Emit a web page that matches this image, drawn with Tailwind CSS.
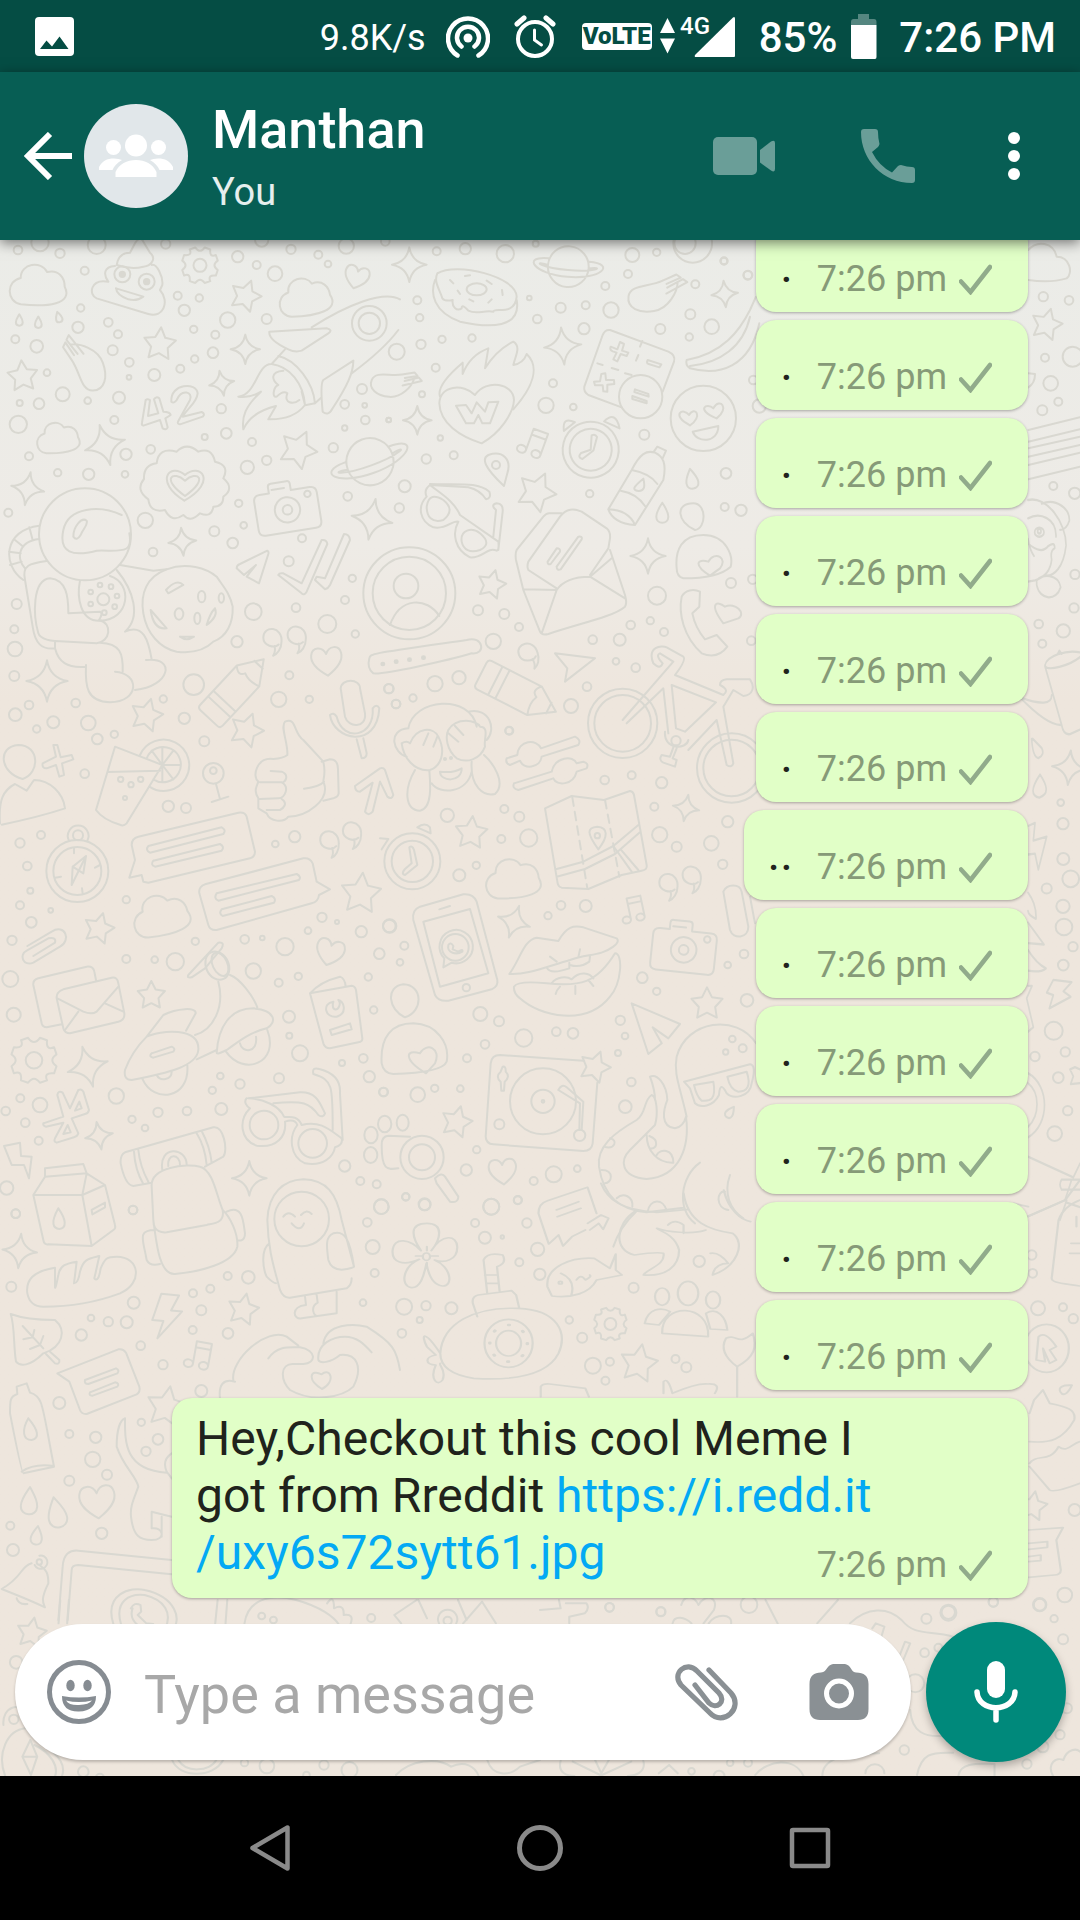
<!DOCTYPE html>
<html lang="en">
<head>
<meta charset="utf-8">
<meta name="viewport" content="width=device-width, initial-scale=1">
<title>Manthan</title>
<script src="https://cdn.jsdelivr.net/npm/@tailwindcss/browser@4"></script>
</head>
<body class="flex h-screen flex-col overflow-hidden bg-black font-['Roboto',sans-serif]">

<!-- System status bar -->
<div class="flex h-18 shrink-0 items-center bg-[#054d44] pr-6 pl-[35px] text-white">
  <svg class="h-[39px] w-[39px]" viewBox="0 0 39 39" role="img" aria-label="Picture saved"><rect width="39" height="39" rx="4" fill="#fff"/><path d="M5 32 11.500 23.500 17 29.500 24.500 19.500 33.500 32Z" fill="#054d44"/></svg>
  <span class="ml-auto pt-1 text-[36px] leading-[42px]">9.8K/s</span>
  <svg class="ml-5 h-11 w-11" viewBox="0 0 44 44" fill="none" stroke="#fff" stroke-width="4.500" stroke-linecap="round" role="img" aria-label="Hotspot"><circle cx="22" cy="24" r="4.500" fill="#fff" stroke="none"/><path d="M11.500 41.500A20 20 0 1 1 32.500 41.500M15.500 32.500A11 11 0 1 1 28.500 32.500"/></svg>
  <svg class="ml-6 h-11 w-[42px]" viewBox="0 0 42 44" fill="none" stroke="#fff" stroke-width="4" stroke-linecap="round" role="img" aria-label="Alarm"><circle cx="21" cy="25" r="17"/><path d="M3 10 10 4M39 10 32 4" stroke-width="5"/><path d="M20.500 16v10l7 5" stroke-width="3"/></svg>
  <span class="ml-[26px] flex h-[27px] w-[70px] items-center justify-center rounded-[4px] bg-white text-[24px] leading-none font-black text-[#054d44]">VoLTE</span>
  <svg class="ml-2 h-11 w-[75px] overflow-visible" viewBox="0 0 75 44" fill="#fff" role="img" aria-label="4G signal"><path d="M7.500 4 15 19H0ZM0 24.500H15L7.500 39.500Z"/><path d="M73 3.500Q75 2 75 5V42Q75 43 74 43H36Q34 43 35 41Z"/><text x="20" y="20" font-size="24" font-weight="500">4G</text></svg>
  <span class="ml-6 pt-1 text-[42px] leading-[50px] font-medium">85%</span>
  <svg class="ml-[14px] h-[45px] w-[26px]" viewBox="0 0 26 45" role="img" aria-label="Battery"><path d="M7 0H18V5H23Q25.500 5 25.500 8V11H0V8Q0 5 2.500 5H7Z" fill="#fff" opacity=".32"/><path d="M0 11H25.500V43Q25.500 45 24 45H2Q0 45 0 43Z" fill="#fff"/></svg>
  <span class="ml-[22px] pt-1 text-[42px] leading-[50px] font-medium">7:26 PM</span>
</div>

<!-- Conversation header -->
<header class="relative z-10 flex h-42 shrink-0 items-center bg-[#075e54] pr-3 pl-6 text-white shadow-[0_3px_12px_rgba(0,0,0,0.5)]">
  <button type="button" aria-label="Back" class="mr-3"><svg class="h-12 w-12" viewBox="0 0 48 48" fill="none" stroke="#fff" stroke-width="6"><path d="M26 2 4 24 26 46M4 24H48"/></svg></button>
  <svg class="mr-6 h-26 w-26 rounded-full bg-[#e1e7ea]" viewBox="0 0 104 104" fill="#fff" role="img" aria-label="Group"><circle cx="52" cy="41.500" r="11"/><circle cx="29.500" cy="43.500" r="7.500"/><circle cx="74.500" cy="43.500" r="7.500"/><path d="M31.500 73V68C35 60 43 56 52 56S69 60 72.500 68V73ZM15 66V63C18 57 23 54.500 30 54.500Q35 54.500 38 56C33 59 30 62 28.500 66ZM89 66V63C86 57 81 54.500 74 54.500Q69 54.500 66 56C71 59 74 62 75.500 66Z"/></svg>
  <div class="flex-1">
    <h1 class="text-[54px] leading-[72px] font-medium">Manthan</h1>
    <p class="text-[38px] leading-[52px] text-white/90">You</p>
  </div>
  <button type="button" aria-label="Video call" class="flex w-36 justify-center"><svg class="h-[38px] w-[62px]" viewBox="0 0 62 38" fill="#6a9e98"><rect width="44" height="38" rx="5"/><path d="M47 13 58 4.500Q62 2.500 62 6V32Q62 36 58 33.500L47 25.500Z"/></svg></button>
  <button type="button" aria-label="Call" class="flex w-36 justify-center"><svg class="h-[54px] w-[54px]" viewBox="0 0 54 54" fill="#6a9e98"><path d="M3 0H14Q17 0 17 3Q17 9 18.500 15Q18 17 17 18L11 23Q18 37 31 43.500L37 37Q38.500 36 40 36Q46 38 51 38Q54 38 54 41V51Q54 54 51 54C22 54 0 31 0 3Q0 0 3 0Z"/></svg></button>
  <button type="button" aria-label="More options" class="flex w-27 justify-center"><svg class="h-12 w-3" viewBox="0 0 12 48" fill="#fff"><circle cx="6" cy="6" r="6"/><circle cx="6" cy="24" r="6"/><circle cx="6" cy="42" r="6"/></svg></button>
</header>

<main class="relative flex min-h-0 flex-1 flex-col justify-end overflow-hidden bg-linear-to-b from-[#ebece8] via-[#eeebe6] via-20% to-[#eee6dd] to-30%">
  <!-- Doodle wallpaper -->
  <svg id="wallpaper" class="absolute inset-0 h-full w-full" viewBox="0 240 1080 1536" preserveAspectRatio="xMidYMin slice" fill="none" stroke="#d9d8d1" stroke-width="2" stroke-linecap="round" stroke-linejoin="round" aria-hidden="true">
    <defs>
      <path id="star" d="M0-10 3-4 9.500-3 5 2 6 8.500 0 5.500-6 8.500-5 2-9.500-3-3-4Z"/>
      <path id="spark" d="M0-10Q1.500-1.500 10 0Q1.500 1.500 0 10Q-1.500 1.500-10 0Q-1.500-1.500 0-10Z"/>
      <path id="heart" d="M0 9C-6 5-10 1-9-4S-2-9 0-4C2-9 8-9 9-4S6 5 0 9Z"/>
      <path id="cloud" d="M-6 6C-11 5-11-2-6-3C-6-8 1-9 3-5C7-6 9-3 9 0C12 6 3 7-6 6Z"/>
      <path id="drop" d="M0-10C3-5 6-1 6 4C6 8 3 10 0 10S-6 8-6 4C-6-1-3-5 0-10Z"/>
      <path id="gear" d="M-2.500-9.500Q0-6 2.500-9.500L5.500-8.500Q5-4 8.500-5.500L9.500-2.500Q6 0 9.500 2.500L8.500 5.500Q4 5 5.500 8.500L2.500 9.500Q0 6-2.500 9.500L-5.500 8.500Q-5 4-8.500 5.500L-9.500 2.500Q-6 0-9.500-2.500L-8.500-5.500Q-4-5-5.500-8.500ZM3.500 0A3.500 3.500 0 1 1-3.500 0A3.500 3.500 0 1 1 3.500 0"/>
      <path id="quote" d="M5 2C2 5-6 3-6-3C-6-12 8-11 7 0C7 5 4 9 1 10Q3 7 2 3"/>
      <path id="camera" d="M-8-5H-5V-7Q-5-8-4-8H1Q2-8 2-7V-5H8Q10-5 10-3V6Q10 8 8 8H-8Q-10 8-10 6V-3Q-10-5-8-5ZM4 1A4 4 0 1 1-4 1A4 4 0 1 1 4 1M1.500 1A1.500 1.500 0 1 1-1.500 1A1.500 1.500 0 1 1 1.500 1M8-3A1 1 0 1 1 6-3A1 1 0 1 1 8-3M-4-6H0"/>
      <path id="note" d="M-3 6V-9L7-9V6M-3-5H7M-3 6A3 2.500 0 1 1-9 6A3 2.500 0 1 1-3 6M7 6A3 2.500 0 1 1 1 6A3 2.500 0 1 1 7 6"/>
      <path id="bolt" d="M-3-10H5L2-3H7L-3 10L-1 2H-6Z"/>
      <path id="hand" d="M-8-4C-5-6 2-7 6-3S11 6 7 8S0 4-5 1M-8-4L-4-2L-10-5L-10-7L-2-3M-5 1L-10-2V-4L-5-1"/>
      <path id="planet" d="M6 0A6 6 0 1 1-6 0A6 6 0 1 1 6 0M-6-2C-14-2-10 3 0 3S14-2 6-2M-6 0C-11-1-8 1 0 1S11-1 6 0"/>
      <path id="clock" d="M10 0A10 10 0 1 1-10 0A10 10 0 1 1 10 0M7.500 0A7.500 7.500 0 1 1-7.500 0A7.500 7.500 0 1 1 7.500 0M-1-5Q0-6 1-5L1 0L-2 4Q-4 4-3 2L0 0ZM2-11Q5-16 8-10ZM-11-4Q-13-9-8-8Z"/>
      <path id="pencil" d="M-10-3V3Q-10 4-9 4H5L11 0L5-4H-9Q-10-4-10-3M-6-4V4M-4-4V4M5-4Q3-2 5-1Q4 1 5 4M9-1.500V1.500"/>
    </defs>
    <g id="stamps"></g>

    <g transform="translate(0 240) scale(.33333)" stroke-width="6">
      <path d="M350 75C355 45 375 38 390 38L405 10Q420-15 430 5L450 38C470 55 455 78 430 80C410 85 380 85 350 75M345 78C310 80 310 105 325 125C270 115 265 165 290 175L445 222C490 235 510 185 480 150L487 135C490 110 470 70 455 75M348 145L430 170Q410 185 385 178Q350 165 348 145"/>
      <circle cx="367" cy="103" r="24"/><circle cx="367" cy="103" r="8" fill="#d9d8d1"/><circle cx="440" cy="125" r="24"/><circle cx="440" cy="125" r="8" fill="#d9d8d1"/>
      <path d="M935 262C1040 195 1150 150 1200 178M1195 270Q1150 330 1055 400M808 275 980 265Q1000 270 985 280L905 332Q885 338 865 328Q805 300 808 275M855 328 815 372C770 370 770 465 715 470Q750 475 783 455C735 500 725 530 730 568C740 545 760 515 828 498L805 538Q880 540 915 495C910 430 870 380 815 372M835 348C890 360 940 430 945 490L915 496M945 490 965 472M1060 362 970 420Q960 430 968 515Q985 530 998 505C1040 440 1060 400 1060 362M850 392C810 395 815 420 835 435C820 440 815 475 830 470Q850 450 862 460C850 490 880 495 898 480M905 455 915 495"/>
      <circle cx="1108" cy="250" r="52"/><circle cx="1108" cy="250" r="32"/>
      <path d="M437 480Q442 475 450 480L444 528 475 520 462 478Q468 468 478 475L490 515Q510 515 512 525L496 535 503 562Q498 572 488 565L480 540 430 557Q424 555 426 548ZM514 485C510 430 590 425 593 460C590 490 565 500 548 530L605 516Q617 522 608 530L540 553Q530 552 535 543L570 480C580 455 545 445 530 480Q522 492 514 485"/>
      <path d="M530 635Q560 605 595 635Q635 620 645 665Q690 675 670 715Q705 745 670 770Q670 800 640 800Q635 835 600 820Q570 850 550 825Q515 850 495 810Q450 820 445 778Q405 750 432 717Q430 675 470 670Q475 620 530 635M553 782C460 725 510 665 555 705C600 665 655 725 553 782M555 768C480 715 520 690 555 722C590 690 630 715 555 768"/>
      <circle cx="255" cy="883" r="138"/><path d="M240 1022C230 1070 240 1145 300 1142C390 1140 400 1030 330 1008"/><circle cx="310" cy="1078" r="18"/>
      <path d="M118 857C10 870 5 975 70 1020M118 897C50 905 50 960 75 985M88 862 98 900M45 900 70 920M27 935 62 940M30 975 65 965M365 825C300 795 205 800 190 870C175 940 220 950 290 932C360 930 400 945 388 880M220 890C220 860 245 830 260 842C265 855 250 865 242 885Q230 905 220 890"/>
      <path d="M140 963C90 970 65 975 75 1020L98 1160C105 1210 125 1230 165 1225V1203M115 1180C100 1130 95 1020 150 1015C200 1020 205 1070 205 1120L300 1115Q310 1120 297 1140C340 1150 330 1205 290 1210L165 1203C120 1200 115 1180 115 1180M165 1225C175 1265 200 1285 258 1280M300 1208C360 1210 370 1240 368 1295M258 1275C255 1340 260 1385 330 1387C420 1385 420 1300 345 1295M405 1350C510 1340 530 1250 438 1260M350 990C400 1050 425 1130 375 1175C430 1150 445 1200 455 1258M360 975 460 992 500 988"/>
      <path d="M500 988C560 965 620 985 650 1010C670 1040 690 1060 698 1100C700 1150 680 1190 640 1205C610 1235 570 1240 530 1235C480 1225 440 1180 430 1120C420 1060 440 1010 500 988M498 1050Q530 1015 550 1035L505 1060ZM452 1110 500 1165Q460 1170 452 1110M645 1105Q655 1130 620 1155Q630 1120 645 1105M540 1190H582Q560 1205 540 1190"/>
      <ellipse cx="605" cy="1070" rx="11" ry="17"/><ellipse cx="537" cy="1122" rx="13" ry="17"/><ellipse cx="592" cy="1135" rx="9" ry="17"/><ellipse cx="664" cy="1074" rx="8" ry="14"/>
      <circle cx="272" cy="1056" r="7"/><circle cx="300" cy="1035" r="7"/><circle cx="333" cy="1040" r="7"/><circle cx="351" cy="1068" r="7"/><circle cx="344" cy="1100" r="7"/><circle cx="272" cy="1092" r="7"/><circle cx="313" cy="1118" r="7"/>
      <path d="M802 932Q807 935 805 942L777 1030 740 1010 768 975 732 1005 710 985Q710 975 720 972ZM835 1005 905 1060Q912 1068 920 1055L982 912Q980 898 965 900L905 1030 850 1000Q838 998 835 1005M945 1020 975 1048Q985 1045 990 1035L1050 900Q1048 882 1032 882L975 1015 950 1010Z"/>
      <path d="M1022 1345C1025 1315 1080 1315 1080 1345L1095 1420C1100 1465 1045 1465 1035 1430ZM990 1425C1000 1500 1130 1530 1138 1405Q1130 1390 1118 1405C1125 1490 1030 1510 1010 1430Q1000 1415 990 1425"/>
      <path d="M1108 1255C1110 1240 1120 1240 1400 1200 1450 1185 1460 1245 1415 1240 1350 1260 1150 1305 1120 1300Q1100 1285 1108 1255"/>
      <path d="M1148 1272h1M1188 1265h1M1228 1259h1M1270 1253h1" stroke-width="14"/>
      <circle cx="1228" cy="1060" r="138"/><circle cx="1228" cy="1060" r="110"/><circle cx="1218" cy="1038" r="37"/><path d="M1170 1155C1200 1070 1280 1070 1318 1128"/>
    </g>

    <g transform="translate(380 240) scale(.33333)" stroke-width="6">
      <path d="M172 100C230 65 410 110 410 170C405 230 340 200 340 215C310 210 290 225 265 212Q245 190 245 205C230 215 215 200 218 180Q195 185 187 175C180 150 160 125 172 100M165 120C150 160 160 215 240 245C330 265 425 265 410 180M255 108 270 106M210 120 220 130M233 152 240 162M320 122 335 132M366 150 368 165M335 178 325 188M268 178 280 184"/><ellipse cx="290" cy="148" rx="30" ry="18"/>
      <path d="M180 470C170 440 210 400 248 368V402Q270 345 325 325L315 385Q350 330 400 305C425 320 405 350 400 375Q430 370 440 342C480 380 460 440 400 508M285 465C250 430 180 435 178 490C180 550 240 590 305 610C360 580 400 520 402 480C400 430 320 415 285 465M228 497 258 550H282L295 525 307 550H330L355 485 325 487 315 515 290 487 275 520 258 495Z"/>
      <path d="M690 270 865 335Q888 345 882 365L848 455M725 502 625 465Q610 455 613 440L668 285Q675 268 690 270M787 303 780 320M775 345 768 362M652 370 668 375M695 384 715 390M735 400 755 405M692 320Q688 330 698 334L710 338 700 358 712 364 722 342 740 348 745 338 726 332 732 312 720 306 712 328ZM642 425 660 424 664 402 676 400 678 420 702 420 703 432 682 434 682 455 670 454 668 436 645 436ZM803 360Q798 370 806 372L838 382 844 373ZM765 448 805 462 806 470 763 456ZM757 468 800 483 800 490 757 477Z"/><circle cx="782" cy="470" r="65"/>
      <path d="M1128 170 1110 210C1080 270 1030 340 920 360Q915 375 930 385C1020 410 1110 380 1138 250M1110 230C1090 320 1020 370 930 378"/>
      <circle cx="970" cy="535" r="98"/><path d="M938 575 1015 558C1015 610 950 610 938 575M930 556C870 525 910 500 927 525C945 495 970 530 930 556M1010 535C945 510 980 485 1000 505C1020 470 1050 505 1010 535"/>
      <path d="M372 738C310 680 305 655 325 645C370 630 395 660 382 700Z"/><circle cx="348" cy="675" r="12"/>
      <path d="M685 808 755 690C780 640 800 630 825 638C850 650 860 670 850 720L765 855Q700 850 685 808M820 637 832 620 858 632 848 655M755 690Q810 700 832 732M722 752Q770 760 795 798M685 808Q745 810 765 855M790 716C760 740 755 750 775 753Q800 755 790 716"/>
      <path d="M150 735Q130 750 140 770C110 800 120 845 160 862C200 870 215 840 235 845C215 880 225 930 270 952C310 955 320 920 350 932Q358 930 355 905L240 825C220 780 180 760 150 735L265 742Q300 750 318 778Q335 775 328 755C290 725 240 735 150 732M340 890 348 810Q330 795 350 790Q370 790 368 815L355 930"/><path d="M140 800C145 765 165 765 190 780C215 800 215 820 190 840C155 850 140 830 140 800M245 905C240 870 275 860 300 880C330 905 320 920 300 930C270 940 250 930 245 905"/>
      <path d="M545 820H510Q500 818 490 830L410 930Q405 940 408 960L430 1050 480 1175Q485 1187 505 1182C600 1150 700 1130 735 1100Q742 1090 735 1065L690 930M530 1045 445 990Q440 980 445 965L540 830C560 805 580 805 605 815L680 865Q692 875 690 895L685 925 630 1005M430 1048 530 1050 485 1180M530 1050C550 1020 590 1010 630 1010L735 1075M630 1010 695 955M503 965 530 925Q542 925 540 935L512 972Q502 975 503 965M530 980 595 890Q608 888 605 898L542 988Q530 992 530 980" />
      <path d="M890 985C885 930 905 885 970 885C1040 885 1060 950 1052 980C1020 1010 950 1015 910 1015Q890 1010 890 985M990 1007C940 975 950 955 985 965C1005 930 1045 955 1020 985ZM940 790C980 790 980 865 945 870C890 845 885 790 940 790"/>
      <path d="M905 1070C915 1050 940 1045 960 1055L958 1100 937 1120C945 1160 960 1180 975 1198L1010 1185 1042 1220C1020 1250 990 1250 965 1240C910 1190 895 1120 905 1070M1030 1150C985 1090 1010 1080 1035 1100C1065 1085 1100 1120 1075 1135Z"/>
      <path d="M525 1240 645 1255 555 1325 562 1285Z"/>
      <circle cx="728" cy="1450" r="104"/><circle cx="728" cy="1450" r="85"/><circle cx="1055" cy="1584" r="104"/><circle cx="1055" cy="1584" r="85"/>
      <path d="M728 1440 880 1265 840 1240Q825 1245 848 1270Q840 1290 820 1270C800 1220 845 1215 860 1222L910 1250Q920 1260 885 1305L1030 1365Q1050 1350 1020 1335Q1020 1320 1040 1318H1110C1125 1340 1120 1365 1090 1368L1060 1350 1030 1400 1060 1570Q1055 1585 1040 1575L1010 1440 925 1530M740 1450 850 1345 865 1480M875 1335 1008 1387 915 1475 888 1465Z"/><circle cx="888" cy="1502" r="14"/><path d="M855 1475C850 1530 920 1530 925 1500M880 1522 870 1550 845 1545Q835 1560 850 1568L885 1580 890 1560 878 1555 890 1525"/>
    </g>

    <g transform="translate(0 720) scale(.33333)" stroke-width="6">
      <path d="M68 177C0 160-10 80 55 75C120 75 120 160 68 177M0 310C-5 240 10 210 45 192L80 212 102 180C150 180 190 220 195 265Q120 290 5 314"/>
      <path d="M160 75 168 110 128 130Q125 145 140 145L168 135 178 170 192 165 186 130 220 118 215 105 182 112 172 75Z"/>
      <path d="M345 80 487 135 380 310Q370 320 360 314Q310 300 288 270ZM322 156 480 152M420 105A77 77 0 1 1 448 200M440 115A53 53 0 1 1 460 178M487 135 487 82M487 135 455 92M487 135 520 92M487 135 540 135M487 135 520 178M487 135 487 185"/><circle cx="362" cy="178" r="8"/><circle cx="393" cy="194" r="8"/><circle cx="422" cy="178" r="8"/><circle cx="375" cy="234" r="6"/>
      <circle cx="640" cy="160" r="31"/><circle cx="640" cy="152" r="10"/><path d="M648 192 660 237M635 246 685 230"/>
      <path d="M862 105C865 70 840 20 855 5C890-10 880 40 910 60L970 125C980 170 965 180 972 190C990 240 920 290 865 290C850 310 810 305 800 280L775 265V235C760 210 770 200 775 185C755 170 770 110 820 117Q850 115 862 105M812 153 845 155C870 165 855 190 845 187H780M845 187C870 200 855 235 835 235L780 237M845 237C865 250 850 265 840 270L800 270M965 125 990 118Q1015 118 1014 150L1016 220Q1015 230 1000 235L970 242M972 185Q960 200 912 206"/>
      <path d="M1070 58 1085 115Q1100 115 1100 100L1090 55"/>
      <path d="M1065 198 1140 145Q1150 142 1155 150L1180 225Q1175 240 1162 230L1140 185 1118 275Q1105 290 1095 275L1118 188 1080 215Q1065 215 1065 198"/>
      <circle cx="232" cy="453" r="93"/><circle cx="232" cy="453" r="72"/><circle cx="234" cy="346" r="15"/><path d="M207 362A31 31 0 1 1 262 362M258 408 215 495 218 440ZM218 440 250 460 258 408M222 385V400M300 435 285 443M165 473 183 470M246 505 248 520"/>
      <path d="M395 375Q395 355 415 350L715 278Q735 275 740 290L765 395Q765 410 750 415L445 488 430 485 425 465 388 473 405 420ZM445 378 665 322Q680 330 670 342L450 398Q435 390 445 378M460 422 660 372Q675 380 665 392L465 440Q450 435 460 422"/>
      <path d="M598 520Q595 500 615 493L910 415Q930 412 938 430L950 485 990 508 957 525Q955 545 935 550L650 630Q630 632 625 615ZM650 520 890 462Q905 470 897 480L655 542Q640 535 650 520M665 568 815 528Q830 535 822 548L668 588Q655 580 665 568"/>
      <path d="M82 678 155 635C195 610 215 660 180 680L100 728C70 740 55 705 80 692L145 655Q170 650 165 668L100 708"/>
      <path d="M185 913 140 922Q128 922 125 910L100 795Q98 780 115 775L260 740Q280 738 283 755L288 780M190 808 335 773Q352 770 355 790L373 880Q375 900 355 905L210 940Q195 940 190 925L170 835Q168 815 190 808M172 835 250 875Q275 885 290 875L355 800M195 930 235 875M370 875 315 850"/>
      <path d="M565 765 655 668Q675 665 665 685L615 745 575 772Q560 775 565 765M375 1050C390 1010 410 980 440 950C480 930 600 920 595 990C590 1040 500 1060 395 1080Q370 1080 375 1050M440 950 490 885C530 865 590 860 587 880L558 932M585 945C640 930 675 860 655 785M690 765C720 775 760 830 772 862M650 998C655 920 690 865 760 865C830 870 830 910 800 925C740 940 710 970 680 990Q650 1005 650 998M590 1018 650 990M428 1078C460 1150 570 1140 562 1035M470 1065C480 1085 515 1080 515 1055M678 995C730 1070 840 1030 802 930M720 970C725 1000 775 1000 768 950M455 1000 515 980Q528 985 520 995L460 1013Q445 1010 455 1000"/><ellipse cx="652" cy="737" rx="34" ry="44" transform="rotate(-25 652 737)"/><ellipse cx="660" cy="733" rx="22" ry="37" transform="rotate(-25 660 733)"/>
      <path d="M930 820 1055 797Q1065 798 1068 810L1087 955Q1088 965 1075 967L990 985Q975 985 970 970ZM930 820Q960 785 1020 770 1035 775 1037 800M990 930 1050 910 1055 928 995 945ZM1015 840C1025 850 1015 872 1005 868Q995 865 1000 845C965 850 975 895 1010 890C1045 880 1030 840 1015 840"/>
      <path d="M130 1210 190 1190 172 1125Q175 1110 188 1118L210 1165 235 1110Q245 1105 250 1115L267 1170Q265 1180 255 1182L215 1195 235 1240Q232 1250 222 1252L170 1268Q160 1265 165 1255L190 1208 138 1220Q128 1218 130 1210M238 1145 245 1165 225 1172ZM203 1215 212 1237 190 1242Z"/>
      <circle cx="792" cy="1215" r="43"/><circle cx="938" cy="1270" r="43"/><path d="M740 1135C730 1145 740 1160 750 1165C715 1200 720 1260 770 1277C830 1285 860 1250 855 1205Q885 1195 892 1215C865 1250 870 1310 915 1330C970 1340 1000 1310 1005 1282Q1030 1275 1025 1255C990 1230 960 1200 905 1215C890 1180 860 1195 852 1190C840 1160 790 1135 745 1135L900 1117C950 1115 960 1150 975 1180Q970 1195 955 1185C930 1150 910 1140 820 1150M998 1230C998 1100 1000 1080 940 1062Q935 1040 958 1047C1010 1060 1022 1090 1020 1120L1028 1260"/>
      <path d="M12 1278 60 1268 63 1308 95 1310 87 1375 72 1335H35Z"/>
      <path d="M135 1370V1345L250 1332 260 1360ZM135 1370 100 1425 130 1560Q132 1575 145 1573L275 1578 340 1530Q348 1525 345 1515L315 1395 260 1360 247 1425 275 1578M100 1425H247L315 1395M275 1470 315 1448V1462L277 1483ZM175 1465C150 1510 160 1525 178 1527C200 1525 200 1500 175 1465"/>
      <path d="M362 1330Q360 1305 375 1297L640 1222C670 1215 685 1290 670 1310L615 1340M455 1388 400 1398Q375 1395 362 1330M402 1295Q405 1350 430 1392M415 1290Q420 1340 445 1385M590 1240Q615 1280 620 1335M605 1233Q630 1280 635 1328M487 1350C475 1275 560 1280 560 1335M505 1338C500 1300 540 1300 540 1335M455 1400C450 1340 560 1330 600 1340C640 1350 650 1430 668 1470C675 1510 640 1510 620 1515L500 1537C460 1540 460 1510 460 1500ZM460 1500C470 1580 480 1665 525 1662C600 1655 700 1630 712 1580C715 1540 690 1490 668 1470M465 1530C410 1530 430 1560 440 1620Q450 1640 480 1632M680 1475C730 1450 730 1510 735 1540 735 1570 710 1560 712 1560"/>
      <path d="M802 1500C805 1420 850 1380 910 1378C980 1380 1010 1420 1025 1500L1062 1640M802 1500C805 1600 825 1650 840 1710Q850 1735 870 1733L1040 1705Q1055 1695 1055 1675M1000 1540C975 1550 980 1580 985 1620C1000 1670 1065 1640 1062 1640C1050 1560 1035 1530 1000 1540M808 1570C780 1590 790 1650 800 1670Q820 1690 828 1690M915 1730 918 1755C870 1760 880 1800 905 1795L1010 1780V1715M950 1725 953 1748C930 1760 940 1790 955 1788M850 1490Q865 1470 885 1490M903 1485Q920 1465 935 1482M875 1510Q900 1540 912 1510"/><circle cx="905" cy="1497" r="82"/>
    </g>

    <g transform="translate(380 720) scale(.33333)" stroke-width="6">
      <path d="M85 25C100-65 270-80 290 20M85 25C20 30 40 100 80 110M265-25C330-40 350 30 320 60M65 70Q80 60 90 70C110 20 160 20 175 50C200 100 180 140 150 150C100 155 70 110 65 70M205 30C230-10 290 0 300 20C330 20 310 60 315 80C300 120 260 130 230 115C200 90 195 50 205 30M145 40 130 75M172 50 160 80M225 18 250 45M205 40 235 65M105 150C70 210 75 270 120 272C160 265 150 180 148 152M275 125C270 200 310 230 345 222C380 190 340 130 312 105M155 190C180 225 260 220 275 155M180 155Q220 160 245 145C245 190 180 185 180 155"/><circle cx="195" cy="117" r="3"/><circle cx="213" cy="114" r="3"/>
      <path d="M380 115 412 105C415 60 470 55 483 85L585 50Q605 60 595 75L485 110C480 145 430 150 420 122L390 135Q375 130 380 115M402 190 515 155C525 110 580 105 590 130L610 125Q628 130 620 145L590 155C580 195 530 200 520 175L415 210Q395 205 402 190"/>
      <path d="M577 232 622 505M675 240 718 470" stroke-dasharray="26 18"/><path d="M495 265 575 228 672 240 750 213Q760 215 762 225L800 435Q803 450 785 452L725 465 625 507 545 503Q535 500 533 490ZM527 448 610 425 700 378 775 315M530 470 615 447 705 402 778 338M700 378 755 455M722 388 775 450M655 388C620 340 620 322 652 320C685 322 685 350 655 388"/><circle cx="652" cy="347" r="8"/>
      <circle cx="97" cy="424" r="84"/><circle cx="97" cy="424" r="62"/><path d="M88 382Q97 375 102 390L112 435 75 465Q62 462 75 447L95 430ZM112 322Q135 305 150 322L152 340ZM0 355 25 357 5 388"/>
      <path d="M100 600Q95 570 120 560L250 523Q280 520 290 545L352 780Q355 800 335 808L205 842Q175 845 165 825ZM130 605 270 567 325 760 180 800ZM178 568 210 558M190 742 193 715A50 50 0 1 1 215 728Z"/><circle cx="226" cy="682" r="40"/><path d="M205 675Q212 665 220 678L218 688 235 695Q250 685 247 695C230 705 200 700 205 675"/><circle cx="259" cy="803" r="11"/>
      <path d="M388 762C420 720 430 660 470 653L535 663C560 620 580 615 610 622L710 655Q720 665 700 680C660 710 620 700 570 720C500 740 440 765 388 762M402 800C410 785 450 785 500 790C600 800 650 790 705 700C730 700 725 790 690 830C620 920 480 890 420 835Q400 820 402 800M500 742Q510 765 568 745V728M570 735Q600 745 628 725L630 710M515 790C530 770 560 768 575 778C600 750 630 760 640 775M510 710 530 725M600 688 595 712M540 800Q530 810 527 822M586 798V822M625 780 640 798"/>
      <path d="M1030 515C1040 490 1080 490 1085 515L1105 620C1105 655 1060 660 1050 630ZM1110 530 1125 610"/>
      <path d="M75 892C25 870 15 800 70 793C130 795 130 875 75 892M5 1030C0 950 35 910 100 910C170 912 210 970 200 1025C190 1050 120 1060 40 1062Q10 1060 5 1030M138 1060C70 1020 75 985 120 1000C140 965 185 985 165 1030Z"/>
      <path d="M755 850 900 912 865 955 818 922 845 970 805 1002Z"/>
      <path d="M610 1022 360 1005Q335 1005 332 1030L317 1250Q318 1272 340 1273L610 1293Q635 1293 638 1270L652 1088M368 1040Q378 1038 377 1055 392 1070 374 1085L372 1112H364L362 1085Q345 1070 362 1055ZM535 1110Q545 1090 560 1102L610 1145 605 1230M535 1110 600 1150 598 1230"/><circle cx="489" cy="1144" r="99"/><circle cx="489" cy="1144" r="35"/><circle cx="489" cy="1144" r="4"/><circle cx="358" cy="1213" r="15"/><circle cx="599" cy="1246" r="17"/>
      <path d="M920 1190C900 1100 880 1060 890 1010C920 900 1070 880 1128 970M912 1085 1110 1033Q1130 1035 1115 1090C1110 1130 1060 1140 1040 1120Q1020 1080 1017 1125C1000 1160 960 1165 945 1150L930 1105ZM942 1095 1000 1085C1010 1140 990 1145 965 1142Q950 1130 942 1095M1042 1070 1100 1055C1115 1100 1100 1115 1075 1115Q1050 1110 1042 1070"/>
      <path d="M810 1070C830 1060 860 1090 862 1140C850 1170 840 1220 885 1225Q910 1220 918 1190C930 1280 900 1370 800 1377C720 1370 720 1320 750 1290L825 1215C835 1180 830 1130 815 1125C790 1140 800 1180 770 1200C700 1240 650 1280 657 1340C670 1430 720 1470 800 1477L910 1463M810 1070Q825 1110 825 1140M800 1245C800 1290 830 1330 880 1328M830 1305C840 1285 880 1285 880 1328M808 1248C840 1260 830 1290 810 1285M690 1255C715 1260 705 1290 672 1280M665 1350C705 1350 695 1390 675 1390M710 1435C730 1415 760 1430 757 1460M803 1475C810 1435 850 1435 860 1472M960 1328C900 1370 890 1470 945 1510M1050 1365C1030 1420 1050 1470 1090 1495M1035 1415C1010 1410 1005 1465 1045 1470M768 1475Q720 1520 700 1580"/>
      <path d="M165 1375Q185 1355 195 1370L235 1430Q235 1450 210 1445L170 1390ZM90 1250 25 1247Q5 1248 5 1275C5 1350 20 1350 55 1345"/><circle cx="126" cy="1312" r="65"/><circle cx="126" cy="1312" r="39"/><ellipse cx="68" cy="1208" rx="18" ry="24"/><ellipse cx="14" cy="1212" rx="20" ry="25"/><ellipse cx="-27" cy="1245" rx="20" ry="25"/><ellipse cx="-28" cy="1305" rx="20" ry="24"/>
    </g>

    <g transform="translate(0 1200) scale(.33333)" stroke-width="6">
      <path d="M82 280C75 230 120 210 165 203V260Q165 275 175 225C180 195 200 190 230 185L222 250Q235 250 240 215C250 175 270 175 298 168L283 235Q295 250 302 205C315 175 320 170 350 170C420 170 430 250 360 280C280 310 190 320 130 320Q90 320 82 280"/>
      <path d="M32 342Q80 360 165 360C200 390 190 440 130 460C90 500 60 500 48 485C40 440 45 380 32 342M68 378 130 445M70 418 98 412 103 390M90 447 120 435 130 408M138 462 165 490Q180 495 178 480L150 455"/>
      <path d="M172 520 355 448Q370 445 378 458L418 560Q422 575 410 583L260 642Q245 643 240 630L208 545ZM255 540 348 505Q360 510 352 520L265 552Q252 552 255 540M270 577 345 547Q360 550 352 560L278 587Q265 588 270 577"/>
      <path d="M700 540C690 480 800 380 860 410L895 437M660 595C655 555 670 535 705 545M805 475C830 440 860 440 900 442C950 450 950 490 910 492H880C840 490 840 540 870 570C940 610 1030 590 1060 560C1090 500 1070 460 1020 465C990 490 960 490 955 480C950 430 1000 410 1035 410C1070 410 1090 430 1115 457M970 430C980 370 1060 370 1100 380C1180 430 1190 450 1200 510M966 567C920 540 930 505 965 523C990 500 1010 545 966 567"/>
      <path d="M52 582 50 560 80 550 90 578C130 590 125 610 162 800L70 820Q65 820 30 640C30 600 30 590 52 582M65 815Q100 790 162 798M85 655C65 690 68 720 95 720C120 715 115 690 85 655"/>
      <path d="M375 655C360 660 350 690 350 740C370 800 410 830 415 860C400 900 390 920 393 950C400 1010 420 1020 455 1020C500 1020 490 980 455 985V935L515 950M375 655C375 720 370 810 500 818M515 760Q485 780 500 815 515 835 515 835M485 950V1010"/>
      <path d="M118 1067A20 20 0 1 1 104 1095M118 1095C140 1110 145 1120 145 1150C120 1200 130 1210 135 1222C90 1200 50 1185 5 1167C70 1130 60 1100 95 1090M50 1195Q55 1215 82 1212M175 1260 188 1100C190 1060 210 1050 235 1052L515 1080M203 1260 215 1110Q215 1095 235 1095L515 1123"/>
    </g>

    <g transform="translate(380 1180) scale(.44643 .33333)" stroke-width="5">
      <path d="M92 212C70 170 65 130 105 130C145 130 135 180 115 212C140 160 172 165 173 200C174 240 145 250 122 240C160 260 165 320 140 318C118 315 108 280 104 250C98 290 90 325 70 323C45 318 50 260 88 238C50 260 28 245 28 215C30 165 70 180 92 212M105 200V212M105 248V262M80 228H95M115 228H130"/><ellipse cx="104" cy="230" rx="8" ry="11"/>
      <path d="M355 100Q355 70 375 62L465 22 485 100M355 100 378 192 400 165 410 198 430 170 460 150M395 90 445 65M397 110 450 85M465 130 495 105 512 115 500 148 490 130 470 150"/>
      <path d="M375 320C370 260 430 230 480 235L515 265 528 222V270L542 285 485 300C470 340 430 355 385 348ZM405 280Q440 300 428 348M440 300Q450 280 460 300Q475 290 470 285"/><circle cx="404" cy="308" r="4"/>
      <path d="M135 520C140 430 210 380 310 385C400 390 420 460 400 520C370 600 270 600 210 595Q135 580 135 520M218 410 208 370Q205 350 220 345L295 332 305 345 312 385M240 338 232 240Q240 215 275 225 285 250 262 260L268 335M235 285H262M238 310H264M135 520C100 450 90 460 105 500L125 525C100 530 100 555 125 555C110 600 130 620 140 600 150 570 130 555 135 550"/><ellipse cx="288" cy="490" rx="54" ry="72"/><ellipse cx="288" cy="490" rx="28" ry="38"/><ellipse cx="288" cy="490" rx="42" ry="55" stroke-dasharray="2 36" stroke-width="8"/>
      <ellipse cx="632" cy="350" rx="16" ry="26"/><ellipse cx="690" cy="340" rx="23" ry="36"/><ellipse cx="746" cy="360" rx="16" ry="26"/><path d="M632 460C630 365 740 370 735 470ZM593 430C600 385 630 380 650 395L625 435ZM730 400C755 380 775 410 778 450L740 447Z"/>
      <path d="M495 10C510 60 540 90 620 97L690 88M680 40C690 130 740 150 790 160C820 190 800 260 745 285Q750 250 780 250 760 215 740 220M570 95C530 130 520 210 570 225Q620 215 635 220C640 255 600 265 590 285C640 290 670 260 670 210C660 160 620 150 620 145C640 155 700 165 730 150M645 135Q660 115 680 135V160M770 30C780 90 810 120 830 125"/>
      <path d="M1452 80 1420 70M1450 110 1535 60 1568 0M1505 290C1500 310 1530 310 1568 318M1505 290 1520 120Q1530 80 1568 60M1560 110V140M1548 190H1568M1545 220H1568"/>
      <ellipse cx="1493" cy="505" rx="50" ry="72"/><path d="M1490 545 1470 540 1475 470Q1490 450 1515 500L1500 510 1515 540 1500 550 1485 505Z"/>
      <path d="M1455 700 1465 660 1485 630 1500 670C1540 680 1560 690 1555 720C1530 780 1500 790 1455 785M1455 860 1500 930Q1510 940 1568 910M1455 850C1470 820 1500 850 1520 800 1540 820 1550 790 1568 785M1453 1050 1530 1043 1515 1080 1525 1170Q1525 1185 1510 1185L1453 1192M1453 1090 1495 1085V1102L1453 1108M1453 1130 1480 1125V1142L1453 1145"/>
      <path d="M775 475C800 460 800 500 835 460C845 500 840 530 800 560C780 540 760 510 775 475M800 560V650M360 650V620Q365 610 380 612L460 625 468 650M635 640V605Q645 590 655 640C690 620 720 610 735 612Q765 610 750 640"/>
    </g>

    <g transform="translate(700 230) scale(.33333)" stroke-width="6">
      <path d="M985 60C1010 30 1060 35 1070 80C1110 80 1120 130 1100 145Q1050 160 985 150M985 600 1140 562M985 635 1140 598M985 655 1140 620M985 680 1140 645M985 705 1140 668M985 748 1140 710M985 430 1005 432Q1005 460 985 472"/>
    </g>

    <g transform="translate(1020 500) scale(.33333 .4592)" stroke-width="5">
      <path d="M24 40C60 25 110 40 108 80M24 0C80-10 140 50 138 100C130 150 100 165 80 165M65 8C110-5 150 20 148 45Q140 65 120 65M24 95C50 110 70 115 85 100Q105 90 104 105 90 110 95 130 90 165 45 175L24 178M50 175C65 160 115 160 122 190C110 220 60 220 50 185ZM24 85Q30 110 42 122"/>
      <ellipse cx="58" cy="70" rx="14" ry="10"/><circle cx="58" cy="68" r="5"/>
      <path d="M75 360C80 340 140 325 180 332M75 360C80 375 150 360 180 342M113 335 118 328 125 335M75 362 125 490Q130 512 150 510L180 500M0 430Q95 455 95 425M0 430Q80 490 122 490M35 520Q38 560 55 562 75 555 65 540L38 520M60 598C30 630 35 645 58 648 90 640 80 620 60 598M24 710 45 703 40 742 80 733 55 805 45 770 24 772M24 855Q50 880 48 912 25 905 24 895M24 920 72 968 24 965M24 980Q50 1010 78 1020 60 1030 24 1025M24 1058H36L20 1085 40 1148 24 1158M24 1248C90 1275 90 1360 24 1388M24 1270C60 1290 60 1340 24 1365M100 1045 155 1050 130 1070 152 1082 88 1107 100 1078 80 1073ZM180 1240 165 1235 150 1240 160 1255 152 1272 180 1270M24 1430 160 1475 180 1445M24 1560 135 1525 155 1480M125 1480H180M125 1502H180M125 1480Q115 1490 125 1502M140 1525 120 1568M140 1530 180 1540"/>
    </g>

    <g transform="translate(0 1600) scale(.34435 .33333)" stroke-width="6">
      <path d="M170 70 175 0M195 70 200 0M625 70 632 0M655 70 660 0M330 75C300-20 380-40 420-30C510-10 530 60 500 90M352 75C330 0 380-20 420-15C480 0 500 40 480 85M380 25Q390 5 408 15L410 35 400 45 425 70 445 72M385 25Q375 55 400 75M710 70C720 0 780-20 860 0C930 20 970 50 985 75M950 10Q970-20 970 25Q1000 10 998 45Q1030 40 1018 72M1145 45 1210 0M1145 45 1165 70M1215 0 1240 55M1330 0 1355 60M1345 70 1400 5 1440 70M1275 70A28 28 0 1 1 1325 70"/>
      <path d="M15 528C-10 460 20 390 75 385M10 375C5 320 60 300 80 350M120 430C180 470 190 500 180 528M100 435C150 460 170 500 160 528M88 420 65 470 90 525 108 470ZM65 470H108M500 480C520 535 620 535 648 480M518 480C540 520 610 515 628 480M1150 525C1190 480 1270 470 1310 500C1350 480 1380 500 1390 528M1415 480C1430 530 1480 530 1510 500L1568 480"/><circle cx="760" cy="48" r="10"/><circle cx="794" cy="60" r="10"/><circle cx="1300" cy="62" r="12"/>
    </g>

    <g transform="translate(540 1600) scale(.34435 .33333)" stroke-width="6">
      <path d="M0 30 60 25 55 0M75 10 135 10Q145 25 130 40L85 50V70M410 15C420-20 450-10 460 15 480-20 520-10 505 30L475 70M385 70C390 45 420 50 440 70M490 70C510 40 560 40 555 70M655 0 690 70M865 0 805 70M900 70C950 20 1010 20 1050 60 1090 110 1130 90 1200 110M965 85 975 70 1000 80 990 115M1045 165 1060 125 1075 130 1055 180M1075 330C1080 400 1120 410 1165 408M1095 525C1110 450 1150 460 1200 458M1215 528C1220 490 1260 490 1320 492V528M1490 528C1470 490 1500 470 1520 480 1530 445 1560 445 1568 455M60 482C50 520 80 528 100 528M300 482C310 520 270 528 255 528M95 485 175 525M265 485 180 525M160 480 178 520 200 480M345 520 375 495 400 520M625 525C660 480 740 470 765 528M820 528C820 480 870 460 985 460M945 520A25 25 0 1 1 1000 520"/>
    </g>
  </svg>

  <!-- Messages -->
  <ol id="messages" class="relative flex flex-col items-end gap-2 pr-13 pb-6"></ol>

  <!-- Composer -->
  <form class="relative flex shrink-0 items-center gap-[15px] pr-[14px] pb-[14px] pl-[15px]">
    <div class="flex h-34 min-w-0 flex-1 items-center rounded-full bg-white pr-[42px] pl-8 shadow-[0_2px_3px_rgba(0,0,0,0.22)]">
      <button type="button" aria-label="Emoji"><svg class="h-16 w-16" viewBox="0 0 64 64" fill="#868c92"><circle cx="32" cy="32" r="29.500" fill="none" stroke="#868c92" stroke-width="5"/><ellipse cx="23.500" cy="25.500" rx="4.200" ry="5.800"/><ellipse cx="40.500" cy="25.500" rx="4.200" ry="5.800"/><path d="M15 36Q32 39 49 36Q49 51 32 51.500T15 36"/><path d="M19 40.500Q32 43.500 45 40.500Q42 44.500 32 45T19 40.500" fill="#fff"/></svg></button>
      <input type="text" aria-label="Message" placeholder="Type a message" class="ml-[33px] h-20 min-w-0 flex-1 bg-transparent pt-1 text-[54px] leading-[64px] text-[#222] outline-none placeholder:text-[#a8a8a8]">
      <button type="button" aria-label="Attach"><svg class="h-[57px] w-[63px]" viewBox="0 0 63 57" fill="none" stroke="#8a9094" stroke-width="5.200" stroke-linecap="round"><path d="M34 6 56 29C69 44 48 63 35 49L6 21C-4 9 12-4 22 7L44 29C52 38 41 46 34 39L20 21" /></svg></button>
      <button type="button" aria-label="Camera" class="ml-[71px]"><svg class="h-[56px] w-[60px]" viewBox="0 0 60 56" fill="#8a9094"><path d="M26 0H34C43 0 41 8 47 8.500C55 8.500 59.500 12 59.500 20V45Q59.500 56 49 56H11Q.5 56 .5 45V20C.5 12 5 8.500 12 8.500C19 8 17 0 26 0Z"/><circle cx="30" cy="29.500" r="12.500" fill="none" stroke="#fff" stroke-width="5"/></svg></button>
    </div>
    <button type="button" aria-label="Voice message" class="flex h-35 w-35 shrink-0 items-center justify-center rounded-full bg-[#00897b] shadow-[0_4px_8px_rgba(0,0,0,0.28)]"><svg class="h-[62px] w-11" viewBox="0 0 44 62" fill="none" stroke="#fff" stroke-width="5.500" stroke-linecap="round"><rect x="13" y="0" width="18" height="37" rx="9" fill="#fff" stroke="none"/><path d="M3 31C4 52 40 52 41 31M22 48V59"/></svg></button>
  </form>
</main>

<!-- System navigation -->
<nav class="flex h-36 shrink-0 items-center justify-center bg-black" aria-label="System navigation">
  <button type="button" aria-label="Back" class="flex w-1/4 justify-center"><svg class="h-12 w-12" viewBox="0 0 48 48" fill="none" stroke="#8a8a8a" stroke-width="4.500" stroke-linejoin="round"><path d="M41.500 3.500V44.500L6.500 24Z"/></svg></button>
  <button type="button" aria-label="Home" class="flex w-1/4 justify-center"><svg class="h-12 w-12" viewBox="0 0 48 48" fill="none" stroke="#8a8a8a" stroke-width="5"><circle cx="24" cy="24" r="20.500"/></svg></button>
  <button type="button" aria-label="Recent apps" class="flex w-1/4 justify-center"><svg class="h-12 w-12" viewBox="0 0 48 48" fill="none" stroke="#8a8a8a" stroke-width="4.500"><rect x="6" y="6" width="36" height="36" rx="1"/></svg></button>
</nav>

<template id="stamp-template">
  <div class="flex items-center gap-3 text-[36px] leading-[42px] text-[#869a78]">
    <time>7:26 pm</time>
    <svg class="h-[31px] w-[33px]" viewBox="0 0 33 31" fill="none" stroke="#91ab8b" stroke-width="4.500" role="img" aria-label="Sent"><path d="M2 17.500 11.500 28 31 3" stroke-linecap="round"/></svg>
  </div>
</template>

<script>
  // Messages, oldest first
  const list = document.getElementById('messages');
  const stamp = document.getElementById('stamp-template').innerHTML;
  const short = ['.', '.', '.', '.', '.', '.', '.', '..', '.', '.', '.', '.', '.'].slice(1);
  list.innerHTML = short.map(t => `<li class="flex items-end gap-6 rounded-[20px] bg-[#e1ffc7] pt-[15px] pr-9 pb-3 pl-6 shadow-[0_1px_3px_rgba(0,0,0,0.3)]"><span class="mb-[6px] text-[48px] leading-[57px] text-[#20231c]">${t}</span>${stamp}</li>`).join('')
    + `<li class="ml-43 grid self-stretch rounded-[20px] bg-[#e1ffc7] pt-3 pr-9 pb-3 pl-6 shadow-[0_1px_3px_rgba(0,0,0,0.3)]"><p class="col-start-1 row-start-1 mb-[5px] text-[48px] leading-[57px] text-[#20231c]">Hey,Checkout this cool Meme I<br>got from Rreddit <a href="https://i.redd.it/uxy6s72sytt61.jpg" class="text-[#03a9f4]">https://i.redd.it<br>/uxy6s72sytt61.jpg</a></p><div class="col-start-1 row-start-1 self-end justify-self-end">${stamp}</div></li>`;

  // Wallpaper tiles: origin, scale, rings (x y r) and small drawings (id x y size angle)
  const tiles = [
    {o: [0, 240], s: [3, 3], rings: '120 8 26 54 30 13 180 40 14 254 92 12 290 15 27 497 12 14 785 0 20 873 28 14 955 44 12 984 72 10 1039 18 23 1156 4 13 713 50 17 770 75 12 825 101 22 242 204 11 325 247 13 533 167 12 598 174 11 553 211 17 683 240 23 800 237 15 234 262 17 46 298 12 110 319 19 354 283 12 581 268 11 646 284 12 639 338 16 584 357 11 338 331 15 388 367 13 541 386 12 463 405 18 387 412 7 141 398 10 188 463 21 263 482 10 357 473 18 59 489 9 117 491 16 55 553 26 343 540 12 664 506 14 679 580 16 614 591 9 756 606 12 378 643 17 452 628 13 742 682 20 800 661 14 87 649 12 173 698 11 266 703 17 375 703 10 25 818 12 716 790 11 1086 447 15 1034 493 13 1094 496 7 1096 540 13 1034 564 8 1166 540 7 1000 623 14 1043 769 13 436 841 23 643 874 15 731 856 10 698 909 16 459 936 13 906 895 12 866 964 15 1057 1015 11 1035 1080 12 888 1103 13 760 1115 25 982 1152 27 1066 1182 11 711 1205 17 50 1092 15 43 1168 12 45 1227 22 43 1308 15 868 1306 12 836 1378 23 928 1378 11 581 1334 31 490 1377 11 553 1435 17 87 1395 13 227 1389 13 46 1424 19 160 1447 18 265 1449 22 110 1467 11 343 1483 11 1167 1346 14 1188 1392 13', marks: 'cloud 115 140 88 0|gear 600 76 56 0|star 737 167 48 20|cloud 917 175 82 -8|heart 1070 110 40 15|star 479 312 50 5|drop 58 240 17 0|drop 115 247 17 0|drop 176 231 16 -15|hand 255 370 80 25|star 68 408 47 -5|spark 736 328 44 0|spark 665 430 38 -10|cloud 175 597 66 -5|spark 315 615 62 -15|star 895 628 58 25|planet 1110 665 118 -20|camera 861 800 95 -9|spark 83 746 50 10|spark 1116 838 62 10|spark 547 905 42 -5|quote 815 1205 42 0|quote 888 1198 42 0|heart 980 1262 50 -5|spark 141 1323 62 0|star 440 1425 50 15|star 740 1470 52 20|pencil 705 1350 115 -47|hand 1185 430 66 -220'},
    {o: [380, 240], s: [3, 3], rings: '170 34 12 256 26 17 376 41 26 757 45 21 830 37 11 467 11 9 112 181 12 119 233 11 123 313 14 186 298 11 276 294 11 50 335 24 448 174 7 472 237 13 542 203 15 617 196 12 676 138 12 693 210 23 612 266 17 744 102 12 841 267 15 931 223 15 946 133 12 1032 63 10 1103 106 13 995 260 22 928 291 11 167 383 12 126 463 9 519 430 12 498 496 23 580 501 10 26 540 7 181 594 8 139 657 14 221 646 12 74 739 18 58 804 14 793 584 15 629 761 11 1038 700 16 1034 801 12 1083 811 17 1053 1029 15 831 1067 27 294 1111 15 373 1122 15 417 1161 12 340 1204 23 752 1155 13 811 1142 11 852 1176 12 638 1199 13 719 1199 18 708 1264 10 767 1283 13 621 1340 13 573 1398 21 165 1331 23 237 1313 20 26 1346 14 48 1392 13 99 1374 11 387 1472 11 1120 420 13 1138 498 20 938 10 58 915 10 32 1118 1018 14 1114 1202 13', marks: 'spark 88 74 52 0|planet 565 80 102 5|hand 830 160 80 125|spark 1034 162 40 -5|spark 548 318 56 -5|spark 112 541 43 0|note 460 610 46 20|clock 632 629 84 15|star 470 755 60 25|drop 935 716 30 -10|drop 847 818 30 0|spark 804 948 53 0|star 335 1033 44 15|quote 445 1248 42 -20|pencil 410 1355 120 27'},
    {o: [0, 720], s: [3, 3], rings: '292 57 16 613 64 15 254 161 13 505 259 17 558 264 15 123 345 12 60 369 14 82 438 13 91 512 9 60 556 12 152 571 7 94 607 16 36 661 14 31 777 24 379 539 11 586 664 11 379 717 12 464 719 10 526 725 26 734 658 13 787 654 7 855 680 26 760 753 23 836 788 12 895 769 11 826 372 10 884 350 17 966 592 14 1011 606 6 924 632 10 1084 635 17 1168 618 19 1138 701 16 1105 771 11 1121 870 11 867 890 18 868 947 9 900 1000 24 1026 1029 9 1090 1015 13 1108 1070 17 1150 1116 13 837 1075 15 661 1068 10 720 1092 14 637 1111 11 41 884 21 349 1128 23 120 1155 22 61 1135 12 17 1173 13 76 1208 13 116 1262 12 474 1177 14 561 1173 13 664 1167 18 396 1198 11 435 1224 10 20 1404 20 1034 1338 17 1081 1383 12 1130 1393 12 1144 1460 22 47 1481 13 399 1470 13', marks: 'quote 987 372 42 -5|quote 1054 345 42 0|star 1083 520 62 5|star 297 625 47 15|cloud 485 590 88 -12|heart 990 695 46 15|star 454 826 43 0|gear 102 1021 71 0|spark 263 1040 62 -15|spark 297 1247 42 -10|spark 748 1375 52 0'},
    {o: [380, 720], s: [3, 3], rings: '388 32 12 674 180 13 755 166 12 845 188 17 823 260 12 373 267 12 202 286 20 418 290 15 446 354 26 364 357 12 289 436 11 238 466 18 839 344 23 890 380 15 994 370 22 1043 305 17 1028 433 14 543 556 13 617 558 18 504 587 11 29 618 20 73 677 12 60 727 10 787 773 16 830 814 11 1092 702 13 1043 735 10 1101 841 19 721 901 14 735 948 10 714 999 9 301 882 21 357 904 15 315 973 13 431 954 26 529 935 13 579 940 16 261 1015 12 754 1086 13 736 1160 19 164 1105 11 241 1106 10 113 1124 22 11 1116 13 1057 957 10 1088 985 12 1037 996 8 290 1289 11 259 1350 17 521 1363 24 592 1346 10 461 1383 12 413 1441 12 77 1431 11 134 1454 17 334 1460 24', marks: 'star 274 338 50 5|cloud 400 480 85 -5|spark 918 264 40 10|quote 863 500 42 0|quote 933 478 42 0|note 760 570 42 -12|spark 402 605 50 18|camera 912 680 96 6|star 981 851 49 0|star 645 1040 48 20|star 230 1205 48 15|heart 368 1353 45 -5|drop 1051 1176 19 35'},
    {o: [0, 1200], s: [3, 3], rings: '47 41 13 399 30 13 1144 20 22 1102 67 13 1118 141 21 1124 219 12 683 228 12 745 232 19 579 280 12 631 266 12 604 331 15 34 260 15 401 308 18 273 354 10 325 365 14 380 367 18 244 405 17 578 390 12 684 400 16 1089 308 10 422 437 13 489 494 14 604 573 18 178 609 18 424 667 11 208 702 12 287 712 17 474 718 16 438 754 14 278 778 23 321 824 15 208 842 15 305 1000 17 31 977 12 39 1050 18 118 1086 8', marks: 'spark 59 153 52 5|bolt 498 350 67 5|star 730 328 48 12|note 597 467 46 10|star 500 620 62 10|heart 292 903 58 -5|drop 88 902 41 3|drop 170 937 46 -12|drop 110 1006 28 8'},
    {o: [380, 1180], s: [2.24, 3], rings: '58 50 11 100 73 18 249 80 24 309 60 12 213 129 12 329 129 14 235 173 18 274 171 5 353 208 20 312 247 12 358 283 17 568 323 15 715 244 17 54 380 24 103 377 14 160 385 18 89 420 9 49 460 13 424 420 11 453 473 15 477 557 24 515 545 12 505 602 12 662 537 12 686 562 15 1460 225 14 1462 280 13 1474 385 21 1530 382 12 1553 416 14 1556 990 18 1478 1274 18 1534 1245 22 1374 1266 14 1273 1297 20 514 1282 13 629 1295 13', marks: 'gear 516 432 51 0|star 580 550 58 10|star 1462 978 45 10|drop 1537 626 20 60'},
    {o: [700, 230], s: [3, 3], rings: '1030 200 14 1107 211 13 1035 383 12 1052 460 22 1118 380 30 1075 515 12 1027 541 15 1060 768 12 1124 790 17 72 93 11 144 135 13', marks: 'star 1040 283 48 15'},
    {o: [1020, 500], s: [3, 2.178], rings: '165 162 14 162 235 14 56 270 13 130 285 20 67 313 12 122 659 10 129 705 17 130 782 18 152 825 25 80 846 15 129 885 20 132 930 25 159 973 14 130 1013 16 101 1156 27 136 1202 14 45 1212 14 115 1258 16 143 1330 14 104 1380 22', marks: 'spark 148 583 52 5'},
    {o: [0, 1600], s: [2.904, 3], rings: '47 187 19 40 358 14 242 515 16 290 533 12 710 488 11 775 498 22 941 495 14 1015 510 24 890 525 10 1078 54 12', marks: 'star 92 98 46 10'},
    {o: [540, 1600], s: [2.904, 3], rings: '202 22 13 351 35 14 607 14 25 1122 56 15 1186 38 24 1316 6 14 1451 14 20 1493 56 11 1519 118 15 1117 158 13 1157 143 12 1090 250 27 1058 450 14 1414 492 14 1510 404 14 1530 325 15 440 514 10 520 528 16 552 488 10 604 488 12 1460 440 17', marks: ''}
  ];
  let art = '';
  for (const {o, s, rings, marks} of tiles) {
    const px = x => (o[0] + x / s[0]).toFixed(1), py = y => (o[1] + y / s[1]).toFixed(1);
    const n = rings.split(' ').map(Number);
    for (let i = 0; i < n.length; i += 3) art += `<circle cx="${px(n[i])}" cy="${py(n[i + 1])}" r="${n[i + 2] / 3}"/>`;
    for (const m of marks ? marks.split('|') : []) {
      const [id, x, y, size, turn] = m.split(' ');
      const k = size / 30;
      art += `<use href="#${id}" transform="translate(${px(+x)} ${py(+y)}) rotate(${turn}) scale(${k})" stroke-width="${2 / k}"/>`;
    }
  }
  document.getElementById('stamps').innerHTML = art;
</script>
</body>
</html>
